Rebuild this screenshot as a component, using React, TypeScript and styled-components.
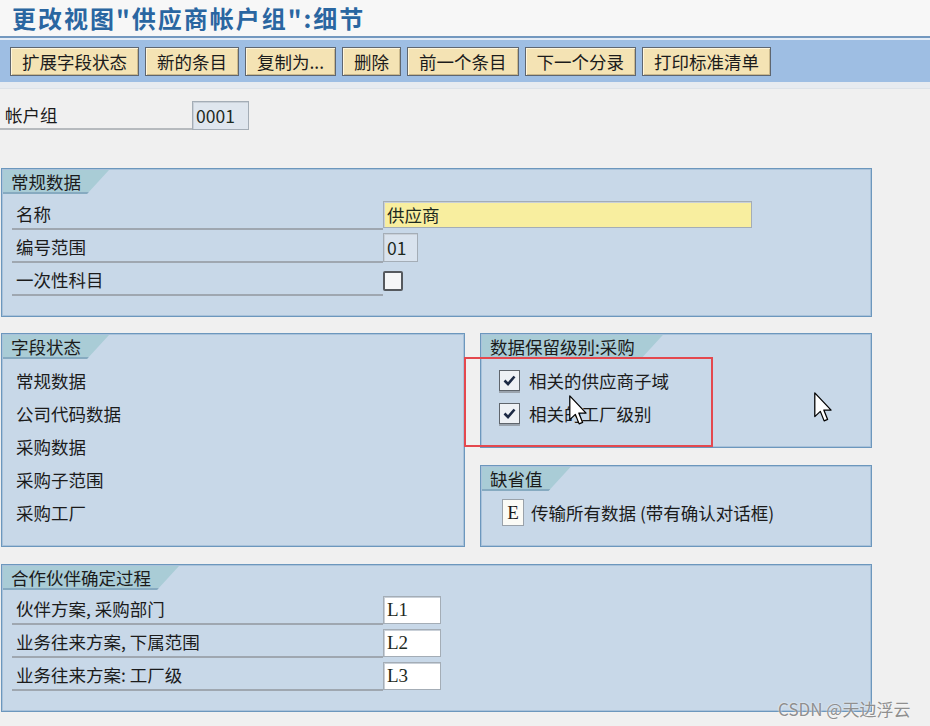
import React from 'react';
import styled, { createGlobalStyle } from 'styled-components';

const GlobalStyle = createGlobalStyle`
  html, body {
    margin: 0;
    padding: 0;
    background: #f0f0f0;
  }
  body {
    font-family: "Noto Sans CJK SC", "Noto Sans", sans-serif;
  }
`;

const Screen = styled.div`
  position: relative;
  width: 930px;
  height: 726px;
  overflow: hidden;
  background: #f0f0f0;
  color: #1b1b1b;
  font-size: 17.5px;
`;

const TitleBar = styled.div`
  height: 38px;
  box-sizing: border-box;
  background: #f7f7f7;
  border-bottom: 2px solid #7398bf;
  padding-left: 12px;
`;

const Title = styled.h1`
  margin: 0;
  font-size: 24px;
  line-height: 36px;
  font-weight: 700;
  letter-spacing: 2px;
  color: #2a66a1;
`;

const Toolbar = styled.div`
  height: 44px;
  box-sizing: border-box;
  border-top: 2px solid #e4ecf6;
  background: #9ebee3;
  display: flex;
  gap: 6px;
  padding: 7px 10px 0;
`;

const ToolButton = styled.button`
  height: 29px;
  box-sizing: border-box;
  padding: 0 11px;
  border: 1px solid #5e6670;
  background: #f4e3b4;
  box-shadow: inset 1px 1px 0 #fff6dc, inset -1px -1px 0 #cbb98c;
  font-family: inherit;
  font-size: 17.5px;
  line-height: 26px;
  color: #1b1b1b;
  white-space: nowrap;
`;

const Strip = styled.div`
  height: 7px;
  box-sizing: border-box;
  background: #e7ebf0;
  border-bottom: 1px solid #dde2e8;
`;

const Body = styled.div`
  padding-top: 12px;
`;

const AccountRow = styled.div`
  display: flex;
  height: 29px;
`;

const AccountLabel = styled.div`
  width: 192px;
  height: 29px;
  box-sizing: border-box;
  padding-left: 5px;
  border-bottom: 2px solid #b6babe;
  line-height: 28px;
`;

const Field = styled.div<{ $w: number; $h: number; $bg: string; $serif?: boolean }>`
  width: ${(p) => p.$w}px;
  height: ${(p) => p.$h}px;
  box-sizing: border-box;
  background: ${(p) => p.$bg};
  border: 1px solid #a4adb6;
  box-shadow: inset 1px 1px 0 #c9d0d8;
  padding-left: 3px;
  line-height: ${(p) => p.$h - 2}px;
  font-family: ${(p) => (p.$serif ? '"Liberation Serif", serif' : 'inherit')};
  font-size: ${(p) => (p.$serif ? '19px' : '17.5px')};
  color: #1e2a1e;
`;

const Panels = styled.div`
  padding-left: 1px;
  width: 871px;
`;

const Panel = styled.section<{ $h: number; $top: number }>`
  height: ${(p) => p.$h}px;
  margin-top: ${(p) => p.$top}px;
  box-sizing: border-box;
  background: #c8d8e8;
  border: 1px solid #6c97bd;
  box-shadow: inset 0 0 0 1px #a9c2da;
  padding: 1px;
`;

const Tab = styled.div`
  display: inline-block;
  height: 24px;
  box-sizing: border-box;
  padding: 0 28px 0 8px;
  line-height: 23px;
  background: #a9ccd6;
  box-shadow: inset 0 -2px 0 #86aac0;
  clip-path: polygon(0 0, 100% 0, calc(100% - 22px) 100%, 0 100%);
  white-space: nowrap;
`;

const TabRow = styled.div`
  display: flex;
  height: 24px;
`;

const FormRows = styled.div<{ $top: number }>`
  padding: ${(p) => p.$top}px 0 0 9px;
`;

const FormRow = styled.div`
  display: flex;
  align-items: center;
  height: 33px;
`;

const RowLabel = styled.div`
  align-self: flex-start;
  width: 371px;
  height: 32px;
  box-sizing: border-box;
  padding-left: 4px;
  border-bottom: 2px solid #9fa7b0;
  line-height: 31px;
`;

const EmptyCheck = styled.div`
  width: 20px;
  height: 20px;
  box-sizing: border-box;
  border: 2px solid #55595e;
  border-radius: 2px;
  background: #f5f6f7;
`;

const SplitRow = styled.div`
  display: grid;
  grid-template-columns: 464px 392px;
  column-gap: 15px;
  margin-top: 16px;
`;

const Stack = styled.div`
  display: flex;
  flex-direction: column;
  gap: 17px;
`;

const ItemList = styled.ul<{ $left: number }>`
  list-style: none;
  margin: 0;
  padding: 5px 0 0 ${(p) => p.$left}px;
`;

const Item = styled.li`
  display: flex;
  align-items: center;
  gap: 9px;
  height: 33px;
`;

const CheckBox = styled.span`
  display: inline-flex;
  align-items: center;
  justify-content: center;
  width: 21px;
  height: 21px;
  box-sizing: border-box;
  border: 1px solid #5f656c;
  background: #eef1f5;
  box-shadow: 0 2px 0 #9aa3ad;
`;

const CodeBox = styled.span`
  display: inline-flex;
  align-items: center;
  justify-content: center;
  width: 22px;
  height: 27px;
  box-sizing: border-box;
  border: 1px solid #9aa2aa;
  background: #fbfbf6;
  font-family: "Liberation Serif", serif;
  font-size: 19px;
  margin-right: -2px;
`;

const RedFrame = styled.div`
  position: absolute;
  left: 464px;
  top: 357px;
  width: 249px;
  height: 90px;
  box-sizing: border-box;
  border: 2px solid #e4484e;
  pointer-events: none;
`;

const Cursor = styled.svg<{ $x: number; $y: number }>`
  position: absolute;
  left: ${(p) => p.$x}px;
  top: ${(p) => p.$y}px;
`;

const Watermark = styled.div`
  position: absolute;
  left: 778px;
  top: 696px;
  font-size: 17px;
  color: #8f8f8f;
  text-shadow: 0 0 2px #ffffff;
  white-space: nowrap;
`;

const buttons = ['扩展字段状态', '新的条目', '复制为...', '删除', '前一个条目', '下一个分录', '打印标准清单'];
const fieldStatus = ['常规数据', '公司代码数据', '采购数据', '采购子范围', '采购工厂'];
const retention = ['相关的供应商子域', '相关的工厂级别'];
const partners = [
  { label: '伙伴方案, 采购部门', value: 'L1' },
  { label: '业务往来方案, 下属范围', value: 'L2' },
  { label: '业务往来方案: 工厂级', value: 'L3' },
];

function Tick() {
  return (
    <svg width="15" height="15" viewBox="0 0 15 15">
      <path d="M2.5 7.5 L6 11 L12.5 3.5" fill="none" stroke="#1d2a45" strokeWidth="2.6" />
    </svg>
  );
}

function Arrow({ x, y }: { x: number; y: number }) {
  return (
    <Cursor $x={x} $y={y} width="19" height="31" viewBox="0 0 12 19.5">
      <path
        d="M0.5 0.5 L0.5 15.5 L4 12.2 L6.4 18.2 L8.6 17.3 L6.2 11.4 L10.8 11.4 Z"
        fill="#ffffff"
        stroke="#000000"
        strokeWidth="0.8"
        strokeLinejoin="round"
      />
    </Cursor>
  );
}

export default function App() {
  return (
    <Screen>
      <GlobalStyle />
      <TitleBar>
        <Title>更改视图"供应商帐户组":细节</Title>
      </TitleBar>
      <Toolbar>
        {buttons.map((b) => (
          <ToolButton key={b}>{b}</ToolButton>
        ))}
      </Toolbar>
      <Strip />
      <Body>
        <AccountRow>
          <AccountLabel>帐户组</AccountLabel>
          <Field $w={57} $h={29} $bg="#dfe6ee">0001</Field>
        </AccountRow>
        <Panels>
          <Panel $h={149} $top={38}>
            <TabRow>
              <Tab>常规数据</Tab>
            </TabRow>
            <FormRows $top={4}>
              <FormRow>
                <RowLabel>名称</RowLabel>
                <Field $w={369} $h={27} $bg="#f8ee9f">供应商</Field>
              </FormRow>
              <FormRow>
                <RowLabel>编号范围</RowLabel>
                <Field $w={35} $h={29} $bg="#d9e3ee">01</Field>
              </FormRow>
              <FormRow>
                <RowLabel>一次性科目</RowLabel>
                <EmptyCheck />
              </FormRow>
            </FormRows>
          </Panel>

          <SplitRow>
            <Panel $h={214} $top={0}>
              <TabRow>
                <Tab>字段状态</Tab>
              </TabRow>
              <ItemList $left={13}>
                {fieldStatus.map((f) => (
                  <Item key={f}>{f}</Item>
                ))}
              </ItemList>
            </Panel>
            <Stack>
              <Panel $h={115} $top={0}>
                <TabRow>
                  <Tab>数据保留级别:采购</Tab>
                </TabRow>
                <ItemList $left={17}>
                  {retention.map((r) => (
                    <Item key={r}>
                      <CheckBox>
                        <Tick />
                      </CheckBox>
                      {r}
                    </Item>
                  ))}
                </ItemList>
              </Panel>
              <Panel $h={82} $top={0}>
                <TabRow>
                  <Tab>缺省值</Tab>
                </TabRow>
                <ItemList $left={20}>
                  <Item>
                    <CodeBox>E</CodeBox>
                    传输所有数据 (带有确认对话框)
                  </Item>
                </ItemList>
              </Panel>
            </Stack>
          </SplitRow>

          <Panel $h={148} $top={17}>
            <TabRow>
              <Tab>合作伙伴确定过程</Tab>
            </TabRow>
            <FormRows $top={3}>
              {partners.map((p) => (
                <FormRow key={p.value}>
                  <RowLabel>{p.label}</RowLabel>
                  <Field $w={58} $h={28} $bg="#ffffff" $serif>
                    {p.value}
                  </Field>
                </FormRow>
              ))}
            </FormRows>
          </Panel>
        </Panels>
      </Body>

      <RedFrame />
      <Arrow x={569} y={395} />
      <Arrow x={814} y={392} />
      <Watermark>CSDN @天边浮云</Watermark>
    </Screen>
  );
}
